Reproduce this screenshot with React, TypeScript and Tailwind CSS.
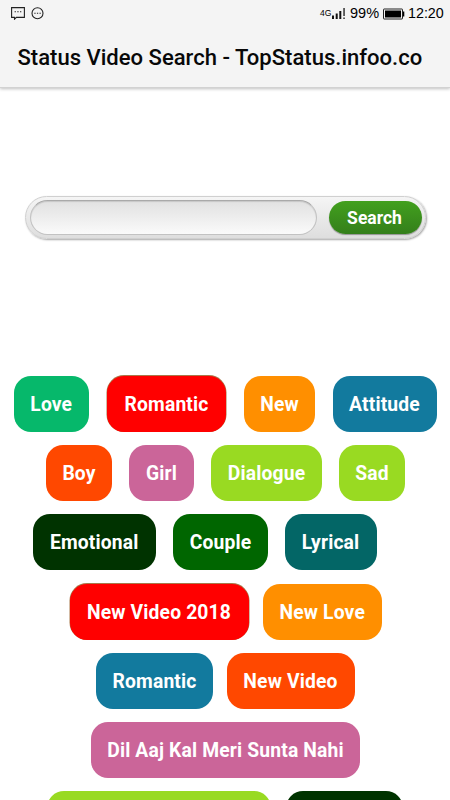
import React from 'react';

const rows = [
  {
    className: 'pl-[14px]',
    tags: [
      { label: 'Love', className: 'w-[74.5px] bg-[#06b86b]' },
      { label: 'Romantic', className: 'w-[119px] ml-[18.5px] bg-[#ff0000] shadow-[0_-0.5px_0_0.5px_#a8784a]' },
      { label: 'New', className: 'w-[71px] ml-[18px] bg-[#ff8f00]' },
      { label: 'Attitude', className: 'w-[104px] ml-[17.5px] bg-[#127a9e]' },
    ],
  },
  {
    className: 'pl-[46px]',
    tags: [
      { label: 'Boy', className: 'w-[66px] bg-[#ff4800]' },
      { label: 'Girl', className: 'w-[65px] ml-[17px] bg-[#cb6599]' },
      { label: 'Dialogue', className: 'w-[111px] ml-[17px] bg-[#99da22]' },
      { label: 'Sad', className: 'w-[66px] ml-[17px] bg-[#99da22]' },
    ],
  },
  {
    className: 'pl-[33px]',
    tags: [
      { label: 'Emotional', className: 'w-[122.5px] bg-[#003300]' },
      { label: 'Couple', className: 'w-[95px] ml-[17.5px] bg-[#006600]' },
      { label: 'Lyrical', className: 'w-[92px] ml-[16.5px] bg-[#036666]' },
    ],
  },
  {
    className: 'pl-[69.5px]',
    tags: [
      { label: 'New Video 2018', className: 'w-[179px] bg-[#ff0000] shadow-[0_-0.5px_0_0.5px_#a8784a]' },
      { label: 'New Love', className: 'w-[119.5px] ml-[14px] bg-[#ff8f00]' },
    ],
  },
  {
    className: 'pl-[96px]',
    tags: [
      { label: 'Romantic', className: 'w-[117px] bg-[#127a9e]' },
      { label: 'New Video', className: 'w-[128px] ml-[13.5px] bg-[#ff4800]' },
    ],
  },
  {
    className: 'pl-[91px]',
    tags: [{ label: 'Dil Aaj Kal Meri Sunta Nahi', className: 'w-[269px] bg-[#cb6599]' }],
  },
  {
    className: 'pl-[47px]',
    tags: [
      { label: '', className: 'w-[224px] bg-[#99da22]' },
      { label: '', className: 'w-[117px] ml-[15px] bg-[#003300]' },
    ],
  },
];

const StatusBar = () => (
  <div className="flex h-[27px] items-center justify-between pl-[11px] pr-[7px] text-black">
    <div className="flex items-center gap-[6px]">
      <svg width="14" height="13" viewBox="0 0 14 13" fill="none" stroke="#222" strokeWidth="1.1">
        <path d="M.6.6h12.8v9.8H5.4L3.5 12.2V10.4H.6z" />
        <path d="M3.6 4.7h1.3M6.3 4.7h1.3M9 4.7h1.3" />
      </svg>
      <svg width="13" height="13" viewBox="0 0 13 13" fill="none" stroke="#222" strokeWidth="1.1">
        <circle cx="6.5" cy="6.3" r="5.5" />
        <path d="M3.3 6.3h1.3M5.9 6.3h1.3M8.5 6.3h1.3" />
      </svg>
    </div>
    <div className="flex items-center font-['Liberation_Sans',sans-serif]">
      <span className="w-[12px] whitespace-nowrap text-[8.5px] leading-none">4G</span>
      <svg width="14" height="11" viewBox="0 0 14 11" className="mr-[4px]">
        <path d="M0 7.5h2V11H0zM3.7 5.5h2V11h-2zM7.3 3h2v8h-2z" fill="#111" />
        <path d="M11.3 0h1.5v8h-1.5zM11.3 9.5h1.5V11h-1.5z" fill="#333" />
      </svg>
      <span className="w-[32px] whitespace-nowrap text-[14.5px] leading-none">99%</span>
      <svg width="22" height="12" viewBox="0 0 22 12" className="ml-px">
        <rect x=".5" y="1" width="19" height="10" rx=".5" fill="none" stroke="#222" />
        <path d="M2 2.4h16v7.2H2zM20 3.5h1.3v5H20z" fill="#000" />
      </svg>
      <span className="ml-[3px] w-[35px] whitespace-nowrap text-[14.3px] leading-none">12:20</span>
    </div>
  </div>
);

const App = () => {
  return (
    <div className="h-[800px] w-[450px] overflow-hidden bg-white font-['Roboto',sans-serif]">
      <header className="h-[88px] border-b border-[#d2d2d2] bg-[#f4f4f4] shadow-[0_1px_3px_rgba(0,0,0,0.25)]">
        <StatusBar />
        <h1 className="whitespace-nowrap pl-[17.5px] pt-[15px] text-[22.05px] font-medium leading-[32px] text-[#080808]">
          Status Video Search - TopStatus.infoo.co
        </h1>
      </header>

      <form className="ml-[25px] mt-[108px] flex h-[43px] w-[401px] items-center rounded-full border border-[#d0d0d0] bg-gradient-to-b from-[#f5f5f5] to-[#dedede] pl-[4px] shadow-[1px_1px_2px_rgba(0,0,0,0.35)]">
        <input
          type="text"
          className="h-[35px] w-[287px] rounded-full border border-[#c2c2c2] border-t-[#a9a9a9] bg-gradient-to-b from-[#e1e1e1] to-[#fafafa] px-4 shadow-[inset_0_1px_1px_rgba(0,0,0,0.12)] outline-none"
        />
        <button
          type="button"
          className="ml-[12px] h-[33px] w-[93px] rounded-full bg-gradient-to-b from-[#42a01e] to-[#347f1b] pr-[2px] pt-px text-[17.5px] font-bold text-white shadow-[0_1px_1px_rgba(0,0,0,0.35)]"
        >
          Search
        </button>
      </form>

      <div className="mt-[137px] flex flex-col gap-[13.2px]">
        {rows.map((row, i) => (
          <div key={i} className={`flex h-[56px] shrink-0 ${row.className}`}>
            {row.tags.map((tag, j) => (
              <button
                key={j}
                className={`h-[56px] shrink-0 whitespace-nowrap rounded-[17px] pt-[3px] text-[19.3px] font-bold tracking-[0.16px] text-white ${tag.className}`}
              >
                {tag.label}
              </button>
            ))}
          </div>
        ))}
      </div>
    </div>
  );
};

export default App;
